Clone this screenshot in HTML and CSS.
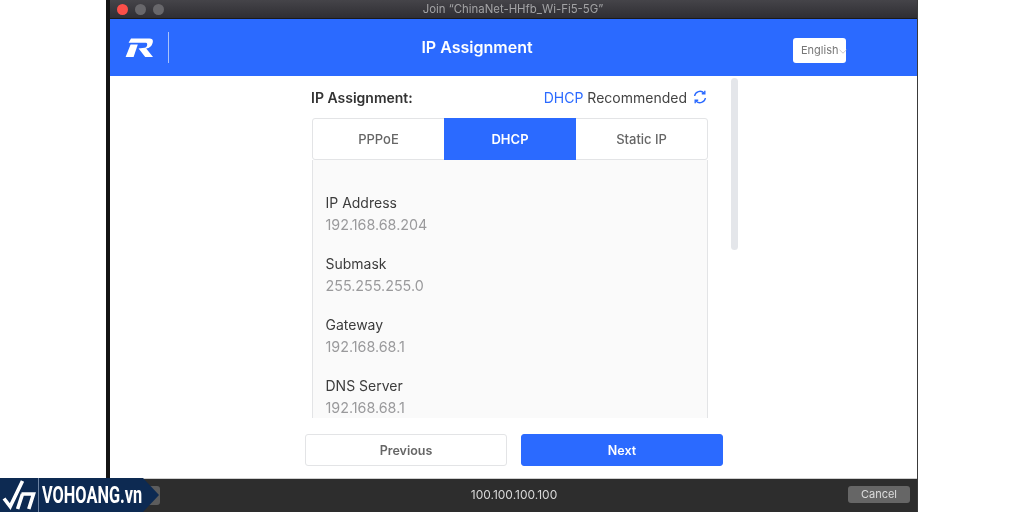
FILE: index.html
```html
<!DOCTYPE html>
<html lang="en">
<head>
<meta charset="utf-8">
<title>IP Assignment</title>
<link rel="stylesheet" href="styles.css">
</head>
<body>
<div class="window">
  <div class="titlebar">
    <div class="lights"><i class="light red"></i><i class="light"></i><i class="light"></i></div>
    <div class="win-title">Join “ChinaNet-HHfb_Wi-Fi5-5G”</div>
  </div>
  <header class="header">
    <div class="brand">
      <svg class="r-logo" viewBox="0 0 28 20" width="28" height="20" aria-hidden="true">
        <path fill="#fff" d="M6 0.5H24.5C27.6 0.5 28.4 2.2 27.6 5C26.7 8.4 24.6 10 21.2 10.6L28 19H20.2L13.6 10.4L19.6 9.7C21.2 9.4 22.2 8.2 22.2 6.4C22.2 5.2 21.5 4.8 20 4.8H3.6Z"/>
        <path fill="#fff" d="M5.6 6.6H12.8L8.6 19H0.6Z"/>
      </svg>
      <span class="divider"></span>
    </div>
    <h1 class="page-title">IP Assignment</h1>
    <button class="lang">English<svg class="chev" viewBox="0 0 8 5" width="8" height="5" aria-hidden="true"><path d="M0.5 0.8L4 4.2L7.5 0.8" fill="none" stroke="#bbb" stroke-width="0.8"/></svg></button>
  </header>
  <main class="content">
    <div class="scroller">
      <div class="column">
        <div class="row-head">
          <strong class="head-label">IP Assignment:</strong>
          <div class="recommend">
            <span class="blue">DHCP</span> Recommended
            <svg class="refresh" viewBox="0 0 14 14" width="14" height="14" aria-hidden="true">
              <path d="M1.6 6A5.5 5.5 0 0 1 11 3" fill="none" stroke="#2b6aff" stroke-width="1.4"/>
              <path d="M11.8 0.8V3.8H8.8" fill="none" stroke="#2b6aff" stroke-width="1.4"/>
              <path d="M12.4 8A5.5 5.5 0 0 1 3 11" fill="none" stroke="#2b6aff" stroke-width="1.4"/>
              <path d="M2.2 13.2V10.2H5.2" fill="none" stroke="#2b6aff" stroke-width="1.4"/>
            </svg>
          </div>
        </div>
        <div class="tabs">
          <div class="tab">PPPoE</div>
          <div class="tab active">DHCP</div>
          <div class="tab">Static IP</div>
        </div>
        <div class="panel">
          <div class="field"><div class="label">IP Address</div><div class="value">192.168.68.204</div></div>
          <div class="field"><div class="label">Submask</div><div class="value">255.255.255.0</div></div>
          <div class="field"><div class="label">Gateway</div><div class="value">192.168.68.1</div></div>
          <div class="field"><div class="label">DNS Server</div><div class="value">192.168.68.1</div></div>
        </div>
      </div>
      <div class="scrollbar"></div>
    </div>
    <div class="actions">
      <button class="btn">Previous</button>
      <button class="btn primary">Next</button>
    </div>
  </main>
  <footer class="footer">
    <div class="foot-left"><span class="foot-btn back"></span></div>
    <div class="foot-ip">100.100.100.100</div>
    <div class="foot-right"><span class="foot-btn">Cancel</span></div>
  </footer>
</div>
<div class="badge">
  <svg class="badge-logo" viewBox="0 0 36 34" width="36" height="34" aria-hidden="true">
    <path fill="none" stroke="#fff" stroke-width="3.6" d="M2 20.5L8.2 28.5L20.5 3"/>
    <path fill="none" stroke="#fff" stroke-width="3.6" d="M20.5 16L15.6 31M19.5 16H31.5L26.8 31"/>
  </svg>
  <span class="badge-sep"></span>
  <span class="badge-text">VOHOANG.vn</span>
</div>
</body>
</html>
```
FILE: styles.css
```css
* { box-sizing: border-box; }
html, body { margin: 0; padding: 0; }
body {
  width: 1024px;
  height: 512px;
  overflow: hidden;
  background: #fff;
  font-family: Inter, "Liberation Sans", Arial, sans-serif;
  position: relative;
}
.window {
  margin-left: 106px;
  width: 812px;
  height: 512px;
  border-left: 4px solid #141414;
  border-right: 1.5px solid #3a3a3a;
  display: flex;
  flex-direction: column;
  filter: blur(0.35px);
}
.titlebar {
  height: 19px;
  flex: none;
  background: linear-gradient(#454449, #2f2e33);
  border-bottom: 1px solid #1a1a1c;
  display: grid;
  grid-template-columns: 1fr auto 1fr;
  align-items: center;
  padding: 0 8px 0 7px;
}
.lights { display: flex; gap: 7px; }
.light { width: 11px; height: 11px; border-radius: 50%; background: #68676b; }
.light.red { background: #fc4f49; }
.win-title { font-size: 11.4px; color: #a3a3a5; }
.header {
  height: 57px;
  flex: none;
  background: #2b6aff;
  display: flex;
  align-items: center;
  padding-right: 71px;
}
.brand { width: 59px; padding-left: 15px; display: flex; align-items: center; justify-content: space-between; flex: none; }
.r-logo { display: block; }
.divider { width: 1px; height: 31px; background: #a9c3fb; }
.page-title {
  flex: 1;
  margin: 0 0 2px;
  text-align: center;
  color: #fff;
  font-size: 16px;
  font-weight: 600;
}
.lang {
  width: 53px;
  height: 25px;
  margin: 5px 0 0 8px;
  flex: none;
  padding: 0 0 0 8px;
  border: 0;
  border-radius: 3px;
  background: #fff;
  color: #777;
  font: 11px Inter, "Liberation Sans", Arial, sans-serif;
  display: flex;
  align-items: center;
}
.chev { flex: none; margin-top: 2px; }
.content { flex: 1; min-height: 0; background: #fff; display: flex; flex-direction: column; }
.scroller { height: 342px; flex: none; overflow: hidden; position: relative; padding: 12px 0 0 202px; }
.column { width: 396px; }
.row-head { display: flex; justify-content: space-between; align-items: center; height: 20px; }
.head-label { font-size: 14px; font-weight: 600; color: #333; margin: 0 0 2px -1px; }
.recommend { font-size: 14px; color: #444; display: flex; align-items: center; gap: 4px; padding: 0 1px 2px 0; }
.blue { color: #2b6aff; }
.refresh { flex: none; margin-left: 2px; }
.tabs {
  margin-top: 10px;
  height: 42px;
  display: flex;
  border: 1px solid #e3e4e6;
  border-radius: 3px;
  background: #fff;
}
.tab {
  flex: 1;
  display: flex;
  align-items: center;
  justify-content: center;
  font-size: 13px;
  font-weight: 500;
  color: #666;
}
.tab.active { flex: 1.01; background: #2b6aff; color: #fff; font-weight: 600; margin: -1px 0; }
.panel {
  height: 300px;
  background: #fafafa;
  border: 1px solid #e3e4e6;
  border-top: 0;
  padding: 32px 12.5px 0;
}
.field { margin-bottom: 18px; }
.label { font-size: 14px; line-height: 21px; color: #3c3c3c; }
.value { font-size: 14.3px; line-height: 21px; padding-top: 1px; color: #9a9a9c; }
.scrollbar {
  position: absolute;
  left: 621px;
  top: 2px;
  width: 7px;
  height: 172px;
  border-radius: 4px;
  background: #e4e6ea;
}
.actions { display: flex; gap: 14px; padding: 16px 0 0 195px; }
.btn {
  width: 202px;
  height: 32px;
  border: 1px solid #e3e4e6;
  border-radius: 3px;
  background: #fff;
  color: #666;
  font: 600 12.5px Inter, "Liberation Sans", Arial, sans-serif;
}
.btn.primary { background: #2b6aff; border-color: #2b6aff; color: #fff; }
.footer {
  height: 34px;
  flex: none;
  background: #2d2d2d;
  border-top: 1px solid #cfcfcf;
  display: grid;
  grid-template-columns: 1fr auto 1fr;
  align-items: start;
  color: #ddd;
  padding: 7px 7px 0 8px;
}
.foot-right { display: flex; justify-content: flex-end; }
.foot-ip { font-size: 12px; line-height: 17px; color: #d8d8d8; }
.foot-btn {
  display: block;
  width: 62px;
  height: 17px;
  border-radius: 3px;
  background: #666;
  font-size: 11px;
  line-height: 17px;
  text-align: center;
  color: #ddd;
}
.foot-btn.back { width: 42px; height: 19px; background: #5c5c5c; }
.badge {
  position: absolute;
  left: 0;
  top: 478px;
  width: 159px;
  height: 34px;
  background: #0d2a52;
  clip-path: polygon(0 0, 143px 0, 159px 17px, 143px 34px, 0 34px);
  display: flex;
  align-items: center;
}
.badge-logo { flex: none; margin-left: 2px; }
.badge-sep { width: 1px; height: 34px; background: #6d83a3; flex: none; }
.badge-text {
  margin-left: 3px;
  color: #fff;
  font: 700 24px Roboto, "Liberation Sans", sans-serif;
  transform: scaleX(0.68);
  transform-origin: left center;
  white-space: nowrap;
}
```
